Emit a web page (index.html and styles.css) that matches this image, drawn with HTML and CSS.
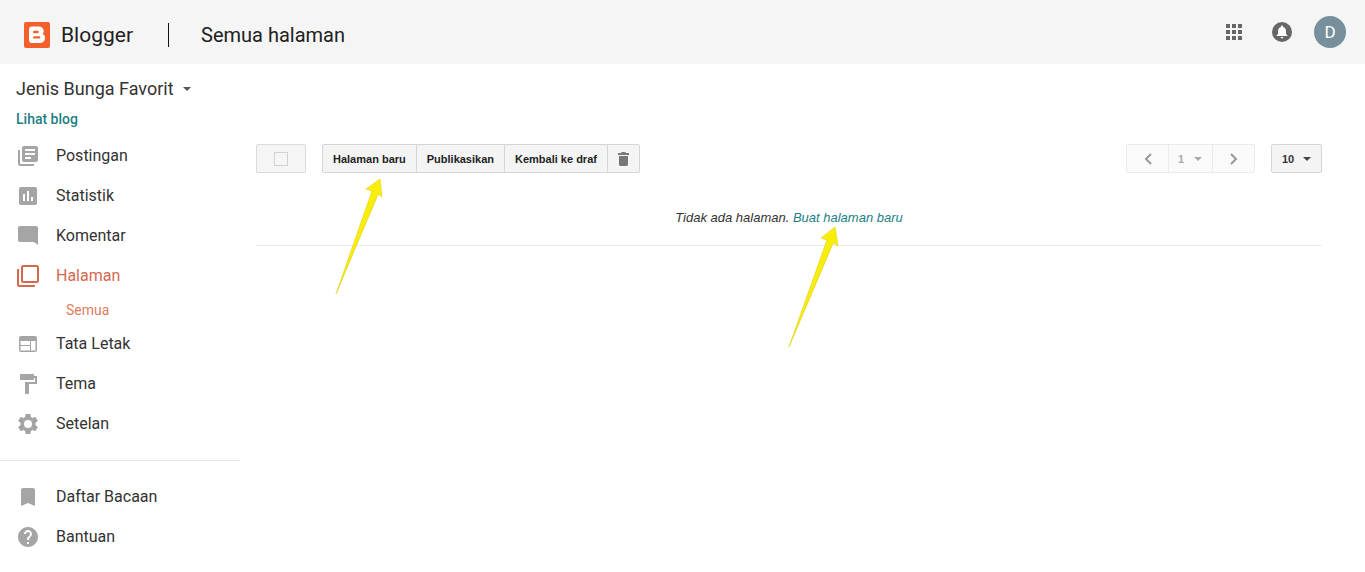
FILE: index.html
```html
<!DOCTYPE html>
<html lang="id">
<head>
<meta charset="utf-8">
<meta name="viewport" content="width=device-width, initial-scale=1">
<title>Blogger: Semua halaman</title>
<link rel="stylesheet" href="styles.css">
</head>
<body>
<header class="topbar">
  <a class="brand" href="#">
    <svg class="brand-logo" viewBox="0 0 26 26" aria-hidden="true"><rect width="26" height="26" rx="2" fill="#f4602c"/><path fill="#fff" fill-rule="evenodd" d="M8 4.500h6.500c3.200 0 5.200 1.800 5.200 4.500 0 1.500-.3 2.300-1 3 1.600.9 2.300 2.100 2.300 3.900 0 3-2.200 5.100-5.500 5.100H8c-1.800 0-3-1.200-3-3v-10.500c0-1.800 1.200-3 3-3zm2.200 4.300a1.200 1.200 0 0 0 0 2.400h3.300a1.200 1.200 0 0 0 0-2.400zm0 5.400a1.200 1.200 0 0 0 0 2.400h5a1.200 1.200 0 0 0 0-2.400z"/></svg>
    <span class="brand-name">Blogger</span>
  </a>
  <h1 class="page-title">Semua halaman</h1>
  <div class="account">
    <button class="icon-button" type="button" aria-label="Aplikasi Google"><svg width="16" height="16" viewBox="0 0 16 16" fill="#666"><path d="M0 0h4v4H0zM6 0h4v4H6zM12 0h4v4h-4zM0 6h4v4H0zM6 6h4v4H6zM12 6h4v4h-4zM0 12h4v4H0zM6 12h4v4H6zM12 12h4v4h-4z"/></svg></button>
    <button class="icon-button" type="button" aria-label="Notifikasi"><svg width="20" height="20" viewBox="0 0 20 20"><circle cx="10" cy="10" r="10" fill="#666"/><path fill="#fff" d="M10 3.500c.6 0 1 .4 1 1v.4c2 .5 3 2.100 3 4.100v3l1.500 1.500v.6h-11v-.6L6 12V9c0-2 1-3.600 3-4.100v-.4c0-.6.4-1 1-1zM8.600 15h2.800a1.400 1.400 0 0 1-2.800 0z"/></svg></button>
    <button class="avatar" type="button">D</button>
  </div>
</header>
<div class="layout">
  <aside class="sidebar">
    <button class="blog-picker" type="button">Jenis Bunga Favorit <svg width="8" height="4" viewBox="0 0 8 4"><path fill="#555" d="M0 0h8L4 4z"/></svg></button>
    <a class="view-blog" href="#">Lihat blog</a>
    <nav>
      <ul class="menu">
        <li><a class="menu-link" href="#"><svg class="menu-icon" viewBox="0 0 24 24"><path d="M4 6H2v14c0 1.100.9 2 2 2h14v-2H4V6zm16-4H8c-1.100 0-2 .9-2 2v12c0 1.100.9 2 2 2h12c1.100 0 2-.9 2-2V4c0-1.100-.9-2-2-2zm-1 9H9V9h10v2zm-4 4H9v-2h6v2zm4-8H9V5h10v2z"/></svg>Postingan</a></li>
        <li><a class="menu-link" href="#"><svg class="menu-icon" viewBox="0 0 24 24"><path d="M19 3H5c-1.100 0-2 .9-2 2v14c0 1.100.9 2 2 2h14c1.100 0 2-.9 2-2V5c0-1.100-.9-2-2-2zM9 17H7v-7h2v7zm4 0h-2V7h2v10zm4 0h-2v-4h2v4z"/></svg>Statistik</a></li>
        <li><a class="menu-link" href="#"><svg class="menu-icon" viewBox="0 0 24 24"><path d="M22 4c0-1.100-.9-2-2-2H4c-1.100 0-2 .9-2 2v12c0 1.100.9 2 2 2h14l4 3z"/></svg>Komentar</a></li>
        <li><a class="menu-link active" href="#" aria-current="page"><svg class="menu-icon" viewBox="0 0 24 24"><g fill="none" stroke="#d5694d" stroke-width="2"><rect x="6" y="2" width="16" height="16" rx="1.500"/><path d="M2 5v15.500q0 1.500 1.500 1.500H19"/></g></svg>Halaman</a>
          <a class="submenu-link" href="#">Semua</a></li>
        <li><a class="menu-link" href="#"><svg class="menu-icon" viewBox="0 0 24 24"><path fill-rule="evenodd" d="M5 4h14a2 2 0 0 1 2 2v12a2 2 0 0 1-2 2H5a2 2 0 0 1-2-2V6a2 2 0 0 1 2-2zm-.5 5v4H14V9zm0 5v4.500H14V14zM15 9v9.500h4.500V9z"/></svg>Tata Letak</a></li>
        <li><a class="menu-link" href="#"><svg class="menu-icon" viewBox="0 0 24 24"><path d="M18 4V3c0-.55-.45-1-1-1H5c-.55 0-1 .45-1 1v4c0 .55.45 1 1 1h12c.55 0 1-.45 1-1V6h1v4H9v11c0 .55.45 1 1 1h2c.55 0 1-.45 1-1v-9h8V4h-3z"/></svg>Tema</a></li>
        <li><a class="menu-link" href="#"><svg class="menu-icon" viewBox="0 0 24 24"><path d="M19.430 12.980c.04-.32.07-.64.07-.98s-.03-.66-.07-.98l2.110-1.650c.19-.15.24-.42.12-.64l-2-3.460c-.12-.22-.39-.3-.61-.22l-2.490 1c-.52-.4-1.080-.73-1.690-.98l-.38-2.650C14.460 2.180 14.250 2 14 2h-4c-.25 0-.46.18-.49.42l-.38 2.650c-.61.25-1.170.59-1.690.98l-2.490-1c-.23-.09-.49 0-.61.22l-2 3.460c-.13.22-.07.49.12.64l2.110 1.650c-.04.32-.07.65-.07.98s.03.66.07.98l-2.110 1.650c-.19.15-.24.42-.12.64l2 3.460c.12.22.39.3.61.22l2.490-1c.52.4 1.080.73 1.690.98l.38 2.650c.03.24.24.42.49.42h4c.25 0 .46-.18.49-.42l.38-2.650c.61-.25 1.170-.59 1.690-.98l2.490 1c.23.09.49 0 .61-.22l2-3.460c.12-.22.07-.49-.12-.64l-2.110-1.650zM12 16a4 4 0 1 1 0-8 4 4 0 0 1 0 8z"/></svg>Setelan</a></li>
      </ul>
      <ul class="menu menu-secondary">
        <li><a class="menu-link" href="#"><svg class="menu-icon" viewBox="0 0 24 24"><path d="M17 3H7c-1.100 0-2 .9-2 2v16l7-3 7 3V5c0-1.100-.9-2-2-2z"/></svg>Daftar Bacaan</a></li>
        <li><a class="menu-link" href="#"><svg class="menu-icon" viewBox="0 0 24 24"><path d="M12 2C6.480 2 2 6.480 2 12s4.480 10 10 10 10-4.480 10-10S17.520 2 12 2zm1 17h-2v-2h2v2zm2.070-7.750l-.9.920C13.450 12.900 13 13.500 13 15h-2v-.5c0-1.100.45-2.100 1.170-2.830l1.240-1.260c.37-.36.59-.86.59-1.410 0-1.100-.9-2-2-2s-2 .9-2 2H8c0-2.210 1.790-4 4-4s4 1.790 4 4c0 .88-.36 1.680-.93 2.250z"/></svg>Bantuan</a></li>
      </ul>
    </nav>
  </aside>
  <main class="content">
    <div class="toolbar">
      <label class="select-all"><input type="checkbox" aria-label="Pilih semua" disabled></label>
      <div class="actions">
        <button class="action" type="button">Halaman baru</button>
        <button class="action" type="button">Publikasikan</button>
        <button class="action" type="button">Kembali ke draf</button>
        <button class="action" type="button" aria-label="Hapus"><svg width="11" height="14" viewBox="0 0 11 14"><path fill="#777" d="M3 1l1-1h3l1 1h3v2H0V1zM1 4h9v8.500q0 1.500-1.500 1.500h-6Q1 14 1 12.500z"/></svg></button>
        <svg class="pointer pointer-action" width="48" height="118" viewBox="0 0 48 118" aria-hidden="true"><path fill="#f9ee0a" stroke="#e2d51c" stroke-width=".7" d="M45 1L31 11l6 2L1 116 43 16l4 3z"/><path fill="#ddd000" d="M40 24L1 116 43 16z"/></svg>
      </div>
      <div class="pager">
        <button class="page-step" type="button" aria-label="Halaman sebelumnya" disabled><svg width="8" height="12" viewBox="0 0 8 12"><path d="M7 1L2 6l5 5"/></svg></button>
        <span class="picker picker-page"><select aria-label="Nomor halaman" disabled><option>1</option></select><svg width="8" height="4" viewBox="0 0 8 4"><path d="M0 0h8L4 4z"/></svg></span>
        <button class="page-step" type="button" aria-label="Halaman berikutnya" disabled><svg width="8" height="12" viewBox="0 0 8 12"><path d="M1 1l5 5-5 5"/></svg></button>
      </div>
      <span class="picker picker-size"><select aria-label="Jumlah per halaman"><option>10</option><option>25</option><option>50</option></select><svg width="8" height="4" viewBox="0 0 8 4"><path d="M0 0h8L4 4z"/></svg></span>
    </div>
    <p class="empty">Tidak ada halaman. <a class="create-link" href="#">Buat halaman baru<svg class="pointer pointer-create" width="52" height="123" viewBox="0 0 52 123" aria-hidden="true"><path fill="#f9ee0a" stroke="#e2d51c" stroke-width=".7" d="M47 1L33 12l6 2L1 121 45 17l5 3z"/><path fill="#ddd000" d="M42 25L1 121 45 17z"/></svg></a></p>
  </main>
</div>
</body>
</html>
```
FILE: styles.css
```css
* { box-sizing: border-box; }

body {
  margin: 0;
  background: #fff;
  color: #333;
  font-family: Roboto, sans-serif;
}

a { text-decoration: none; }
button, select { font: inherit; color: inherit; }
button { cursor: pointer; }
svg { flex: none; }

.topbar {
  display: flex;
  align-items: center;
  height: 64px;
  padding: 0 19px 0 24px;
  background: #f5f5f5;
}

.brand {
  display: flex;
  align-items: center;
  gap: 11px;
  padding: 6px 35px 0 0;
  color: #212121;
}

.brand-logo { width: 26px; height: 26px; }

.brand-name {
  font-size: 21px;
  line-height: 24px;
}

.page-title {
  margin: 6px 0 0;
  padding-left: 32px;
  border-left: 1px solid #111;
  color: #212121;
  font-size: 20px;
  font-weight: 400;
  line-height: 24px;
}

.account {
  display: flex;
  align-items: center;
  gap: 12px;
  margin-left: auto;
}

.icon-button {
  display: grid;
  place-items: center;
  width: 36px;
  height: 36px;
  padding: 0;
  border: 0;
  background: none;
}

.avatar {
  width: 32px;
  height: 32px;
  margin-left: 2px;
  padding: 0;
  border: 0;
  border-radius: 50%;
  background: #78909c;
  color: #fff;
  font-size: 17px;
}

.layout { display: flex; }

.sidebar {
  flex: none;
  width: 240px;
  padding-top: 13px;
}

.blog-picker {
  display: flex;
  align-items: center;
  gap: 9px;
  padding: 0 16px;
  border: 0;
  background: none;
  font-size: 18px;
  line-height: 24px;
}

.view-blog {
  display: block;
  margin: 8px 16px 6px;
  color: #1d7f84;
  font-size: 14px;
  font-weight: 500;
  line-height: 20px;
}

.menu {
  margin: 0;
  padding: 0;
  list-style: none;
}

.menu-link {
  display: flex;
  align-items: center;
  gap: 16px;
  height: 40px;
  padding-left: 16px;
  color: #333;
  font-size: 16px;
}

.menu-icon {
  width: 24px;
  height: 24px;
  margin-top: 2px;
  fill: #a5a5a5;
}

.menu-link.active { color: #d5694d; }

.submenu-link {
  display: block;
  padding: 3px 0 1px 66px;
  color: #e07d5f;
  font-size: 14px;
  line-height: 24px;
}

.menu-secondary {
  margin-top: 17px;
  padding-top: 15px;
  border-top: 1px solid #e5e5e5;
}

.content {
  flex: 1;
  min-width: 0;
  padding: 80px 43px 0 16px;
}

.toolbar {
  display: flex;
  height: 29px;
  gap: 16px;
  color: #333;
  font: bold 11px "Liberation Sans", sans-serif;
}

.select-all {
  display: grid;
  place-items: center;
  width: 50px;
  border: 1px solid #dcdcdc;
  border-radius: 2px;
  background: #f5f5f5;
}

.select-all input {
  appearance: none;
  width: 14px;
  height: 14px;
  margin: 0;
  border: 1px solid #d2d2d2;
}

.actions {
  position: relative;
  display: flex;
}

.action {
  display: flex;
  align-items: center;
  padding: 0 10px;
  border: 1px solid #d5d5d5;
  background: #f4f4f4;
  color: #222;
}

.action + .action { margin-left: -1px; }
.action:first-child { border-radius: 2px 0 0 2px; }
.action:last-of-type { border-radius: 0 2px 2px 0; }

.pager {
  display: flex;
  margin-left: auto;
  border: 1px solid #ebebeb;
  border-radius: 2px;
  background: #fafafa;
}

.page-step {
  display: grid;
  place-items: center;
  width: 41px;
  padding: 0;
  border: 0;
  background: none;
}

.page-step path {
  fill: none;
  stroke: #999;
  stroke-width: 2;
}

.picker {
  position: relative;
  display: flex;
  align-items: center;
}

.picker select {
  appearance: none;
  width: 100%;
  height: 100%;
  padding: 0 10px;
  border: 0;
  background: none;
  opacity: 1;
}

.picker svg {
  position: absolute;
  right: 10px;
  fill: #444;
  pointer-events: none;
}

.picker-page {
  width: 45px;
  border: solid #ebebeb;
  border-width: 0 1px;
  color: #aaa;
}

.picker-page select { padding: 0 9px; }
.picker-page svg { fill: #aaa; }

.picker-size {
  width: 51px;
  border: 1px solid #d5d5d5;
  border-radius: 2px;
  background: #f4f4f4;
}

.empty {
  margin: 29px 0 0;
  padding: 6px 0 17px;
  border-bottom: 1px solid #ebebeb;
  font: italic 13px/20px "Liberation Sans", sans-serif;
  text-align: center;
}

.create-link {
  position: relative;
  color: #1d7f84;
}

.pointer {
  position: absolute;
  pointer-events: none;
}

.pointer-action { top: 34px; left: 13px; }
.pointer-create { top: 16px; left: -5px; }
```
